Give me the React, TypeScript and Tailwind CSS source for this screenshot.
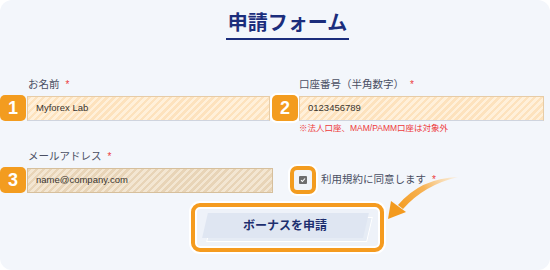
import React from "react";

function Badge({ n, ring = false }: { n: string; ring?: boolean }) {
  return (
    <div
      className={
        "flex h-[26px] w-[26px] shrink-0 items-center justify-center rounded-[5px] bg-[#f39c1f] text-[18px] font-bold leading-none text-white " +
        (ring ? "shadow-[0_0_0_2px_#ffffff]" : "")
      }
    >
      {n}
    </div>
  );
}

function Star() {
  return <span className="ml-[6px] text-[10px] text-[#ec3b3b]">*</span>;
}

export default function App() {
  return (
    <div className="h-[270px] w-[550px] bg-white font-['Liberation_Sans','Noto_Sans_CJK_JP',sans-serif]">
      <div className="relative h-full w-full overflow-hidden rounded-[12px] bg-[#f3f6fb]">
        {/* Title */}
        <div className="flex justify-center pl-[25px] pt-[9px]">
          <h1 className="border-b-2 border-[#1b2d7c] px-[2px] pb-[1px] text-[20px] font-bold leading-[28px] text-[#1b2d7c]">
            申請フォーム
          </h1>
        </div>

        {/* Labels row 1 */}
        <div className="mt-[36px] flex h-[16px] text-[10.5px] leading-[16px] text-[#4a4f63]">
          <div className="w-[299px] pl-[28px]">
            お名前
            <Star />
          </div>
          <div>
            口座番号（半角数字）
            <Star />
          </div>
        </div>

        {/* Inputs row 1 */}
        <div className="mt-[3px] flex h-[26px] items-center">
          <Badge n="1" />
          <div className="ml-[1px] flex h-[25px] w-[243px] items-center border border-[#e7cca6] border-b-[#cfd4de] bg-[repeating-linear-gradient(135deg,#fde2bd_0_2.5px,#fff0da_2.5px_5px)] pl-[8px] text-[9.5px] text-[#3a3530]">
            Myforex Lab
          </div>
          <div className="ml-[2px]">
            <Badge n="2" ring />
          </div>
          <div className="ml-[1px] flex h-[25px] w-[245px] items-center border border-[#e7cca6] border-b-[#cfd4de] bg-[repeating-linear-gradient(135deg,#fde2bd_0_2.5px,#fff0da_2.5px_5px)] pl-[8px] text-[9.5px] text-[#3a3530]">
            0123456789
          </div>
        </div>

        {/* Note */}
        <div className="pl-[299px] text-[8.5px] leading-[14px] text-[#ee3b3b]">
          ※法人口座、MAM/PAMM口座は対象外
        </div>

        {/* Label row 2 */}
        <div className="mt-[13px] h-[16px] pl-[28px] text-[10.5px] leading-[16px] text-[#4a4f63]">
          メールアドレス
          <Star />
        </div>

        {/* Row 2 */}
        <div className="mt-[3px] flex h-[26px] items-center">
          <Badge n="3" />
          <div className="ml-[1px] flex h-[25px] w-[246px] items-center border border-[#d6bf9c] bg-[repeating-linear-gradient(135deg,#e8d4b7_0_2.5px,#f3e6d2_2.5px_5px)] pl-[8px] text-[9.5px] text-[#3a3530]">
            name@company.com
          </div>
          <div className="ml-[17px] flex h-[28px] w-[26px] shrink-0 items-center justify-center rounded-[7px] border-[4px] border-[#f39c1f] bg-[#f1f4f9] shadow-[0_0_0_2px_#ffffff]">
            <div className="flex h-[8px] w-[8px] items-center justify-center rounded-[1px] bg-[#6d6d6d]">
              <svg width="6" height="6" viewBox="0 0 6 6">
                <path d="M1 3.2 L2.4 4.5 L5 1.5" fill="none" stroke="#fff" strokeWidth="1.1" />
              </svg>
            </div>
          </div>
          <div className="ml-[5px] text-[10.5px] text-[#4a4f63]">
            利用規約に同意します
            <Star />
          </div>
        </div>

        {/* Button */}
        <div className="mt-[10px] flex justify-center pl-[25px]">
          <div className="flex h-[49px] w-[193px] items-center justify-center rounded-[9px] border-[4px] border-[#f59b1f] bg-[#eef2f9] shadow-[inset_0_0_0_2px_#ffffff,0_0_0_2px_#ffffff]">
            <div className="relative h-[29px] w-[165px]">
              <div className="absolute left-[4px] top-[4px] h-[25px] w-[161px] skew-x-[-13deg] border border-white bg-[#e6ecf5]" />
              <div className="absolute left-0 top-0 flex h-[25px] w-[161px] skew-x-[-13deg] items-center justify-center bg-[#dfe6f2]">
                <span className="skew-x-[13deg] text-[12px] font-bold text-[#1d2f6f]">ボーナスを申請</span>
              </div>
            </div>
          </div>
        </div>

        {/* Arrow */}
        <svg
          className="pointer-events-none absolute left-0 top-0"
          width="550"
          height="270"
          viewBox="0 0 550 270"
        >
          <defs>
            <linearGradient id="ag" gradientUnits="userSpaceOnUse" x1="458" y1="177" x2="396" y2="210">
              <stop offset="0" stopColor="#fde9cc" stopOpacity="0.6" />
              <stop offset="0.5" stopColor="#f7b457" />
              <stop offset="1" stopColor="#f39a1e" />
            </linearGradient>
          </defs>
          <path d="M458 177 Q421 178 398 205 L403 209 Q424 185 458 177 Z" fill="url(#ag)" />
          <path d="M388 219 L391 201 L406 212 Z" fill="#f39a1e" />
        </svg>
      </div>
    </div>
  );
}
